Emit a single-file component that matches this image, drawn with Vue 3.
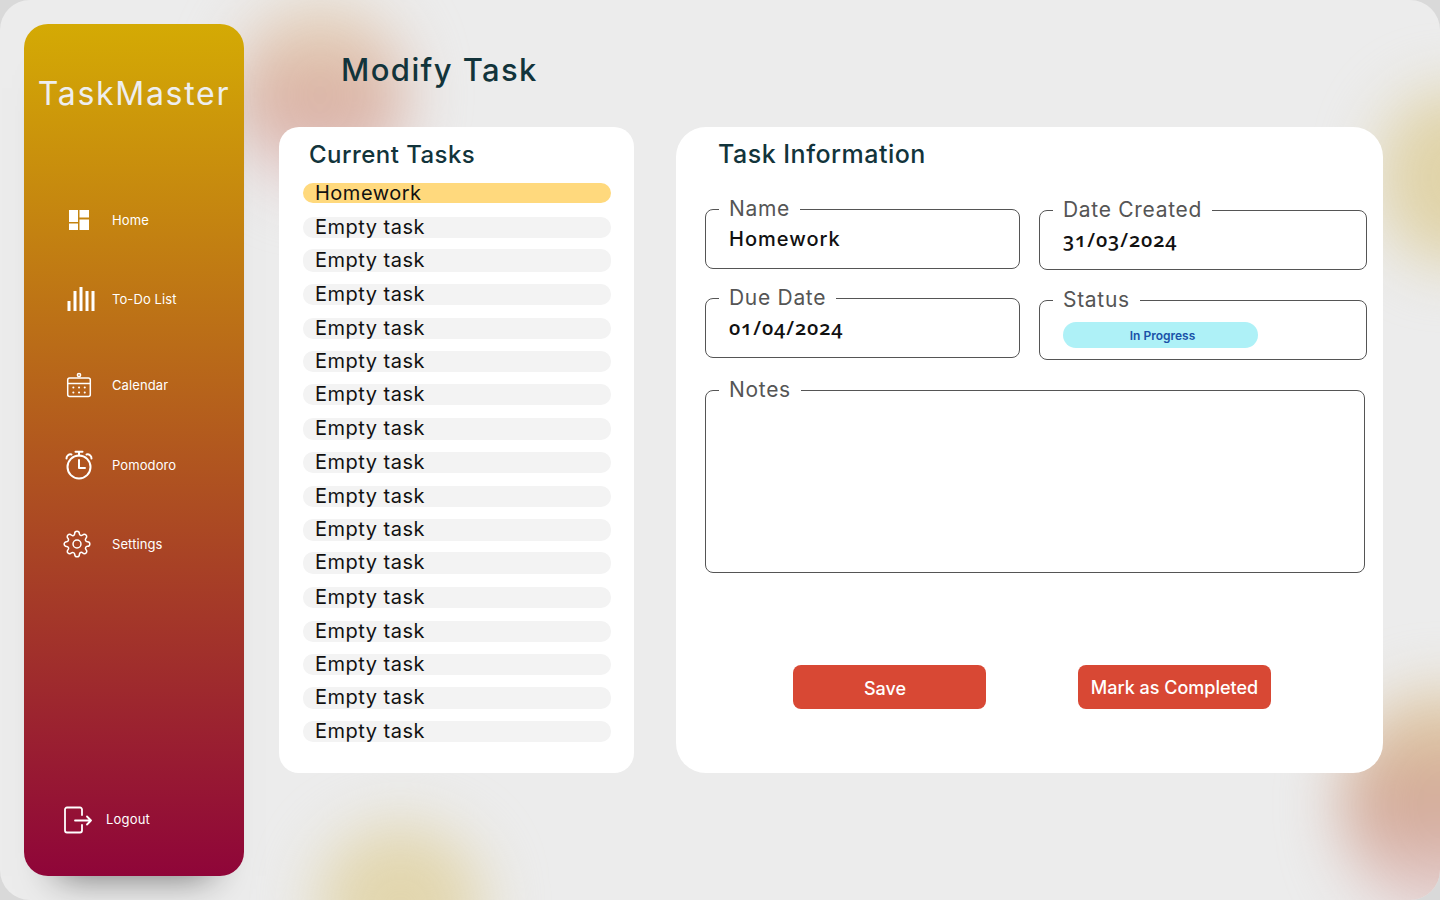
<script setup>
const navItems = [
  { label: 'Home', icon: 'home' },
  { label: 'To-Do List', icon: 'todo' },
  { label: 'Calendar', icon: 'calendar' },
  { label: 'Pomodoro', icon: 'pomodoro' },
  { label: 'Settings', icon: 'settings' },
];

// top edge and height of each row, the list in the design isn't evenly spaced
const rowBoxes = [
  [183, 20], [217, 21], [249, 23], [284, 21], [318, 21], [351, 21], [384, 21], [418, 22],
  [452, 21], [486, 21], [519, 22], [552, 22], [587, 21], [621, 21], [654, 21], [687, 22], [721, 21],
];

const tasks = rowBoxes.map(([top, height], i) => ({
  name: i === 0 ? 'Homework' : 'Empty task',
  active: i === 0,
  style: {
    height: height + 'px',
    marginTop: (i === 0 ? 0 : top - rowBoxes[i - 1][0] - rowBoxes[i - 1][1]) + 'px',
  },
}));
</script>

<template>
  <div class="page">
    <div class="blob blob-rose"></div>
    <div class="blob blob-sand-right"></div>
    <div class="blob blob-sand-bottom"></div>
    <div class="blob blob-corner"></div>

    <aside class="sidebar">
      <div class="brand">TaskMaster</div>
      <nav class="nav">
        <a v-for="item in navItems" :key="item.label" class="nav-item">
          <span class="nav-icon">
            <svg v-if="item.icon === 'home'" width="20" height="20" viewBox="0 0 20 20" fill="#fff">
              <rect x="0" y="0" width="9" height="12" />
              <rect x="0" y="13.5" width="9" height="6.5" />
              <rect x="10.5" y="0" width="9.5" height="7.5" />
              <rect x="10.5" y="9.5" width="9.5" height="10.5" />
            </svg>
            <svg v-else-if="item.icon === 'todo'" class="todo-icon" width="28" height="26" viewBox="0 0 28 26" fill="#fff">
              <rect x="0.5" y="15" width="3" height="10" />
              <rect x="6.5" y="5" width="3" height="20" />
              <rect x="12.5" y="1" width="3" height="24" />
              <rect x="18.5" y="5" width="3" height="20" />
              <rect x="24.5" y="5" width="3" height="20" />
            </svg>
            <svg v-else-if="item.icon === 'calendar'" width="26" height="26" viewBox="0 0 26 26" fill="none" stroke="#fff" stroke-width="1.5">
              <circle cx="13" cy="3" r="1.6" />
              <rect x="1.7" y="6" width="22.6" height="18.6" rx="2" />
              <path d="M1.7 11.5h22.6" />
              <path d="M7.3 15.5h.1M13 15.5h.1M18.7 15.5h.1M7.3 20.5h.1M13 20.5h.1M18.7 20.5h.1" stroke-width="2" stroke-linecap="round" />
            </svg>
            <svg v-else-if="item.icon === 'pomodoro'" width="28" height="30" viewBox="0 0 28 30" fill="none" stroke="#fff" stroke-width="2">
              <circle cx="14" cy="17" r="11.5" />
              <path d="M10.5 1.8h7M14 2v3.5" stroke-linecap="round" />
              <path d="M1.5 8.5a4 4 0 0 1 5-4M26.5 8.5a4 4 0 0 0-5-4" stroke-linecap="round" />
              <path d="M14 10v8h6" stroke-linecap="round" stroke-linejoin="round" />
            </svg>
            <svg v-else class="gear-icon" width="28" height="28" viewBox="0 0 24 24" fill="none" stroke="#fff" stroke-width="1.3" stroke-linejoin="round">
              <circle cx="12" cy="12" r="3.4" />
              <path d="M19.4 15a1.65 1.65 0 0 0 .33 1.82l.06.06a2 2 0 0 1 0 2.83 2 2 0 0 1-2.83 0l-.06-.06a1.65 1.65 0 0 0-1.82-.33 1.65 1.65 0 0 0-1 1.51V21a2 2 0 0 1-2 2 2 2 0 0 1-2-2v-.09A1.65 1.65 0 0 0 9 19.4a1.65 1.65 0 0 0-1.82.33l-.06.06a2 2 0 0 1-2.83 0 2 2 0 0 1 0-2.83l.06-.06a1.65 1.65 0 0 0 .33-1.82 1.65 1.65 0 0 0-1.51-1H3a2 2 0 0 1-2-2 2 2 0 0 1 2-2h.09A1.65 1.65 0 0 0 4.6 9a1.65 1.65 0 0 0-.33-1.82l-.06-.06a2 2 0 0 1 0-2.83 2 2 0 0 1 2.83 0l.06.06a1.65 1.65 0 0 0 1.82.33H9a1.65 1.65 0 0 0 1-1.51V3a2 2 0 0 1 2-2 2 2 0 0 1 2 2v.09a1.65 1.65 0 0 0 1 1.51 1.65 1.65 0 0 0 1.82-.33l.06-.06a2 2 0 0 1 2.83 0 2 2 0 0 1 0 2.83l-.06.06a1.65 1.65 0 0 0-.33 1.82V9a1.65 1.65 0 0 0 1.51 1H21a2 2 0 0 1 2 2 2 2 0 0 1-2 2h-.09a1.65 1.65 0 0 0-1.51 1z" />
            </svg>
          </span>
          <span>{{ item.label }}</span>
        </a>
      </nav>
      <a class="logout">
        <svg class="logout-icon" width="28" height="28" viewBox="0 0 28 28" fill="none" stroke="#fff" stroke-width="1.8" stroke-linecap="round" stroke-linejoin="round">
          <path d="M18 9V3.5a2 2 0 0 0-2-2H3a2 2 0 0 0-2 2v21a2 2 0 0 0 2 2h13a2 2 0 0 0 2-2V19" />
          <path d="M11 14.5h16M23 10.5l4 4-4 4" />
        </svg>
        <span>Logout</span>
      </a>
    </aside>

    <main class="main">
      <h1 class="page-title">Modify Task</h1>
      <div class="cards">
        <section class="card tasks-card">
          <h2 class="tasks-title">Current Tasks</h2>
          <div class="task-list">
            <div
              v-for="(task, i) in tasks"
              :key="i"
              class="task-row"
              :class="{ active: task.active }"
              :style="task.style"
            >{{ task.name }}</div>
          </div>
        </section>

        <section class="card info-card">
          <h2 class="info-title">Task Information</h2>
          <div class="field-grid">
            <div class="field-col">
              <fieldset class="field">
                <legend>Name</legend>
                <div class="value">Homework</div>
              </fieldset>
              <fieldset class="field">
                <legend>Due Date</legend>
                <div class="value date">01/04/2024</div>
              </fieldset>
            </div>
            <div class="field-col right">
              <fieldset class="field">
                <legend>Date Created</legend>
                <div class="value date">31/03/2024</div>
              </fieldset>
              <fieldset class="field">
                <legend>Status</legend>
                <div class="pill">In Progress</div>
              </fieldset>
            </div>
          </div>
          <fieldset class="field notes">
            <legend>Notes</legend>
          </fieldset>
          <div class="actions">
            <button class="btn save">Save</button>
            <button class="btn">Mark as Completed</button>
          </div>
        </section>
      </div>
    </main>
  </div>
</template>

<style>
html, body {
  margin: 0;
  background: #d9d9d9;
}
</style>

<style scoped>
.page {
  position: relative;
  width: 1440px;
  height: 900px;
  box-sizing: border-box;
  padding: 24px 0 24px 24px;
  display: flex;
  overflow: hidden;
  border-radius: 30px;
  font-family: Inter, "Liberation Sans", sans-serif;
  background-color: #ececec;
}

.blob {
  position: absolute;
  border-radius: 50%;
  filter: blur(30px);
}

.blob-rose {
  left: 235px;
  top: 0;
  width: 170px;
  height: 190px;
  background: linear-gradient(180deg, #e8dcc4 0%, #d9ae9f 55%, #e6d4da 100%);
}

.blob-sand-right {
  left: 1378px;
  top: 90px;
  width: 150px;
  height: 175px;
  background: #e0d3a8;
}

.blob-sand-bottom {
  left: 318px;
  top: 825px;
  width: 165px;
  height: 160px;
  background: #e2d6ae;
}

.blob-corner {
  left: 1342px;
  top: 690px;
  width: 200px;
  height: 230px;
  background: linear-gradient(180deg, #e2d2aa 0%, #d2a796 50%, #e8d6da 100%);
}

.sidebar {
  position: relative;
  width: 220px;
  height: 852px;
  flex: none;
  display: flex;
  flex-direction: column;
  border-radius: 24px;
  color: #fff;
  background: linear-gradient(180deg, #d4aa04 0%, #8f0539 100%);
  box-shadow: 0 32px 36px -32px rgba(0, 0, 0, 0.55);
}

.brand {
  margin-top: 49px;
  text-align: center;
  font-size: 32px;
  line-height: 42px;
  letter-spacing: 1.7px;
  color: #eeeeee;
  white-space: nowrap;
}

.nav {
  display: flex;
  flex-direction: column;
  gap: 49px;
  margin-top: 90px;
}

.nav-item {
  height: 30px;
  display: flex;
  align-items: center;
  font-size: 13px;
  letter-spacing: 0.1px;
  color: #fff;
}

.nav-item:nth-child(3) {
  margin-top: 7px;
}

.nav-item:nth-child(4) {
  margin-top: 1px;
}

.nav-icon {
  width: 60px;
  margin: 0 3px 0 25px;
  display: flex;
  align-items: center;
  justify-content: center;
  flex: none;
}

.todo-icon {
  margin-left: 3px;
}

.gear-icon {
  margin-right: 4px;
}

.logout {
  margin-top: auto;
  margin-bottom: 42px;
  padding-left: 40px;
  display: flex;
  align-items: center;
  gap: 14px;
  font-size: 13px;
  letter-spacing: 0.2px;
}

.logout-icon {
  margin-top: 2px;
}

.main {
  position: relative;
  margin-left: 35px;
  display: flex;
  flex-direction: column;
}

.page-title {
  margin: 0;
  height: 103px;
  box-sizing: border-box;
  padding: 10px 0 0 62px;
  font-size: 31px;
  line-height: 72px;
  font-weight: 500;
  letter-spacing: 1.4px;
  color: #12343b;
}

.cards {
  display: flex;
  gap: 42px;
}

.card {
  height: 646px;
  box-sizing: border-box;
  background: #fff;
}

.tasks-card {
  width: 355px;
  border-radius: 20px;
  padding: 14px 23px 0 24px;
}

.tasks-title {
  margin: 0 0 14px 6px;
  font-size: 24px;
  line-height: 28px;
  font-weight: 500;
  letter-spacing: 0.45px;
  color: #12343b;
}

.task-row {
  box-sizing: border-box;
  border-radius: 10px;
  padding: 0 0 2px 12px;
  display: flex;
  align-items: center;
  background: #f3f3f3;
  font-size: 20px;
  letter-spacing: 0.5px;
  color: #111;
}

.task-row.active {
  padding-bottom: 0;
  background: #ffd97d;
}

.info-card {
  width: 707px;
  border-radius: 30px;
  padding: 13px 0 0 29px;
}

.info-title {
  margin: 0 0 29px 13px;
  font-size: 25px;
  line-height: 28px;
  font-weight: 500;
  letter-spacing: 0.5px;
  color: #12343b;
}

.field-grid {
  display: grid;
  grid-template-columns: 315px 328px;
  gap: 19px;
}

.field-col {
  display: flex;
  flex-direction: column;
  gap: 17px;
}

.field-col.right {
  margin-top: 1px;
  gap: 18px;
}

.field {
  height: 72px;
  min-width: 0;
  margin: 0;
  box-sizing: border-box;
  padding: 0 23px;
  border: 1px solid #555;
  border-radius: 8px;
}

.field legend {
  margin-left: -10px;
  padding: 0 10px;
  font-size: 21px;
  line-height: 24px;
  letter-spacing: 0.7px;
  color: #555;
}

.value {
  margin-top: 3px;
  font-size: 20px;
  line-height: 30px;
  font-weight: 500;
  letter-spacing: 1px;
  color: #111;
}

.date {
  font-family: "Open Sans", sans-serif;
  font-weight: 600;
  letter-spacing: 0.9px;
  font-variant-numeric: oldstyle-nums;
}

.pill {
  width: 195px;
  height: 26px;
  margin-top: 10px;
  padding-left: 4px;
  box-sizing: border-box;
  border-radius: 13px;
  text-align: center;
  font-size: 12px;
  line-height: 28px;
  font-weight: 600;
  color: #1a52a8;
  background: #aef1f7;
}

.notes {
  width: 660px;
  height: 195px;
  margin-top: 18px;
}

.actions {
  margin: 92px 0 0 88px;
  display: flex;
  gap: 92px;
}

.btn {
  width: 193px;
  height: 44px;
  padding: 0;
  border: none;
  border-radius: 8px;
  background: #d84834;
  color: #fff;
  font-family: inherit;
  font-size: 18px;
  font-weight: 500;
}

.save {
  padding: 3px 9px 0 0;
}
</style>
